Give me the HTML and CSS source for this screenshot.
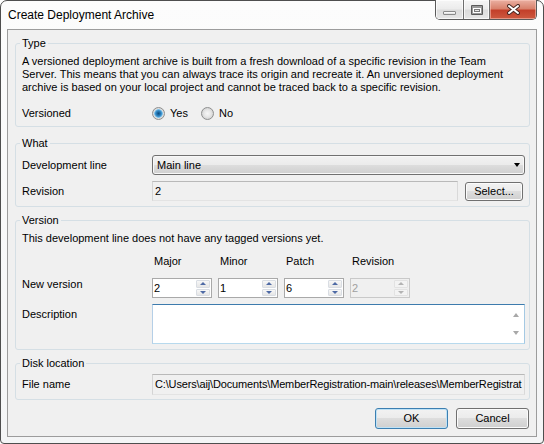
FILE: index.html
```html
<!DOCTYPE html>
<html>
<head>
<meta charset="utf-8">
<title>Create Deployment Archive</title>
<link rel="stylesheet" href="styles.css">
</head>
<body>
<div class="window">
  <div class="titlebar">
    <span class="title">Create Deployment Archive</span>
    <div class="caption-buttons">
      <span class="cb cb-min"><span class="min-glyph"></span></span>
      <span class="cb cb-max">
        <svg width="12" height="10" viewBox="0 0 12 10"><rect x="0" y="0" width="12" height="10" rx="1" fill="#5a5a5a"/><rect x="1" y="1" width="10" height="8" fill="#9a9a9a"/><rect x="2" y="3" width="8" height="5" fill="#ffffff"/><rect x="3" y="4" width="6" height="3" fill="#7a7a7a"/><rect x="4" y="5" width="4" height="1" fill="#e8e8e8"/></svg>
      </span>
      <span class="cb cb-close">
        <svg width="15" height="11" viewBox="0 0 15 11"><path d="M3 2 L12 9 M12 2 L3 9" stroke="#4a2a24" stroke-width="4" stroke-linecap="round"/><path d="M3 2 L12 9 M12 2 L3 9" stroke="#ffffff" stroke-width="2" stroke-linecap="round"/></svg>
      </span>
    </div>
  </div>
  <div class="client">
    <fieldset class="group group-type">
      <legend>Type</legend>
      <p class="desc">A versioned deployment archive is built from a fresh download of a specific revision in the Team<br>Server. This means that you can always trace its origin and recreate it. An unversioned deployment<br>archive is based on your local project and cannot be traced back to a specific revision.</p>
      <div class="row row-versioned">
        <span class="label">Versioned</span>
        <div class="radios">
          <span class="radio"><span class="radio-dot checked"></span><span class="radio-text yes">Yes</span></span>
          <span class="radio"><span class="radio-dot"></span><span class="radio-text">No</span></span>
        </div>
      </div>
    </fieldset>

    <fieldset class="group group-what">
      <legend>What</legend>
      <div class="row">
        <span class="label">Development line</span>
        <div class="combo"><span>Main line</span><span class="combo-arrow"></span></div>
      </div>
      <div class="row row-revision">
        <span class="label">Revision</span>
        <div class="rev-controls">
          <div class="field field-rev">2</div>
          <div class="btn btn-select">Select...</div>
        </div>
      </div>
    </fieldset>

    <fieldset class="group group-version">
      <legend>Version</legend>
      <p class="note">This development line does not have any tagged versions yet.</p>
      <div class="row row-heads">
        <span class="label"></span>
        <div class="spins heads">
          <span class="head">Major</span>
          <span class="head">Minor</span>
          <span class="head">Patch</span>
          <span class="head">Revision</span>
        </div>
      </div>
      <div class="row row-top row-spins">
        <span class="label">New version</span>
        <div class="spins">
          <div class="spin"><span class="spin-val">2</span><span class="spin-btns"><span class="sb up"></span><span class="sb down"></span></span></div>
          <div class="spin"><span class="spin-val">1</span><span class="spin-btns"><span class="sb up"></span><span class="sb down"></span></span></div>
          <div class="spin"><span class="spin-val">6</span><span class="spin-btns"><span class="sb up"></span><span class="sb down"></span></span></div>
          <div class="spin disabled"><span class="spin-val">2</span><span class="spin-btns"><span class="sb up"></span><span class="sb down"></span></span></div>
        </div>
      </div>
      <div class="row row-top row-desc">
        <span class="label label-desc">Description</span>
        <div class="desc-box"><span class="scroll"><span class="sarrow up"></span><span class="sarrow down"></span></span></div>
      </div>
    </fieldset>

    <fieldset class="group group-disk">
      <legend>Disk location</legend>
      <div class="row">
        <span class="label">File name</span>
        <div class="field field-file">C:\Users\aij\Documents\MemberRegistration-main\releases\MemberRegistrat</div>
      </div>
    </fieldset>

    <div class="actions">
      <div class="btn btn-default">OK</div>
      <div class="btn">Cancel</div>
    </div>
  </div>
</div>
</body>
</html>
```

FILE: styles.css
```css
* { box-sizing: border-box; }
html, body { margin: 0; padding: 0; }
body {
  width: 544px;
  height: 444px;
  overflow: hidden;
  background: #ffffff;
  font-family: "Liberation Sans", Arial, sans-serif;
  font-size: 11px;
  color: #000;
}

.window {
  width: 544px;
  height: 444px;
  border: 1px solid #4e4e4e;
  border-radius: 7px 7px 4px 4px;
  background: linear-gradient(#fcfcfc, #f4f5f6);
  padding: 0 6px 6px 6px;
  display: flex;
  flex-direction: column;
}

/* title bar */
.titlebar {
  height: 28px;
  flex: none;
  display: flex;
  align-items: flex-start;
}
.title {
  font-size: 12px;
  line-height: 28px;
  padding-left: 1px;
}
.caption-buttons {
  margin-left: auto;
  margin-top: -1px;
  height: 20px;
  display: flex;
  border: 1px solid #5a5a5a;
  border-top: none;
  border-radius: 0 0 5px 5px;
  overflow: hidden;
}
.cb {
  height: 100%;
  display: flex;
  align-items: center;
  justify-content: center;
}
.cb-min, .cb-max {
  border-right: 1px solid #6e6e6e;
  background: linear-gradient(#f6f6f6 0%, #ececec 45%, #dcdcdc 55%, #e6e6e6 100%);
  box-shadow: inset 0 0 0 1px rgba(255,255,255,0.7);
}
.cb-min { width: 28px; align-items: flex-end; padding-bottom: 4px; }
.cb-max { width: 26px; }
.cb-close {
  width: 46px;
  background: linear-gradient(#eab0a2 0%, #d9826d 45%, #c3402a 55%, #cd5a40 100%);
  box-shadow: inset 0 0 0 1px rgba(255,210,200,0.5);
}
.min-glyph {
  width: 13px;
  height: 4px;
  border: 1px solid #8a8a8a;
  border-radius: 1px;
  background: linear-gradient(#ffffff, #dcdcdc);
}

/* client area */
.client {
  flex: 1;
  border: 1px solid #9c9c9c;
  background: #f0f0f0;
  padding: 0 6px 0 7px;
  display: flex;
  flex-direction: column;
}

.group {
  margin: 0;
  min-width: 0;
  border: 1px solid #d5dfe5;
  border-radius: 3px;
  padding: 5px 4px 5px 6px;
}
.group legend {
  padding: 0 2px;
  margin-left: -2px;
  line-height: 13px;
}
.group-type { margin-top: 7px; padding-bottom: 3px; }
.group-what { margin-top: 10px; }
.group-version { margin-top: 7px; }
.group-disk { margin-top: 7px; padding-top: 4px; padding-bottom: 4px; }

.desc, .note {
  margin: 0;
  line-height: 13px;
  white-space: nowrap;
}

.row {
  display: grid;
  grid-template-columns: 130px 1fr;
  align-items: center;
  line-height: 13px;
}
.row + .row { margin-top: 6px; }
.row-top { align-items: start; }
.row-versioned { margin-top: 9px; height: 20px; }
.row-heads { margin-top: 10px; }
.row-heads + .row-spins { margin-top: 10px; }
.label-desc { margin-top: 4px; }

/* radios */
.radios { display: flex; align-items: center; }
.radio { display: inline-flex; align-items: center; }
.radio-dot {
  width: 13px;
  height: 13px;
  border-radius: 50%;
  border: 1px solid #8e8f8f;
  background: radial-gradient(circle, #f6f6f6 0, #e9e9e9 3px, #d2d2d2 6px);
  margin-right: 5px;
}
.radio-dot.checked {
  background: radial-gradient(circle, #0f4d7e 0, #1c6aa5 1.5px, #3d92cc 3px, #7cc0ea 4px, #e2e2e2 4.6px, #d2d2d2 6px);
}
.radio-text.yes { margin-right: 13px; }

/* combo */
.combo {
  height: 20px;
  border: 1px solid #707070;
  border-radius: 3px;
  background: linear-gradient(#f2f2f2 0%, #ebebeb 50%, #dddddd 51%, #cfcfcf 100%);
  box-shadow: inset 0 0 0 1px #f8f8f8;
  display: flex;
  align-items: center;
  padding: 0 4px 0 4px;
}
.combo-arrow {
  margin-left: auto;
  width: 0;
  height: 0;
  border-left: 3.5px solid transparent;
  border-right: 3.5px solid transparent;
  border-top: 4px solid #000;
}

/* fields */
.rev-controls { display: flex; align-items: flex-start; }
.field {
  height: 20px;
  border: 1px solid;
  border-color: #b9b9b9 #d9d9d9 #e3e3e3 #d4d4d4;
  background: #f0f0f0;
  padding-left: 2px;
  line-height: 18px;
  white-space: nowrap;
  overflow: hidden;
}
.field-rev { flex: 1; }
.field-file { height: 21px; line-height: 19px; letter-spacing: -0.15px; }

/* buttons */
.btn {
  height: 21px;
  width: 73px;
  border: 1px solid #707070;
  border-radius: 3px;
  background: linear-gradient(#f2f2f2 0%, #ebebeb 49%, #dddddd 50%, #cfcfcf 100%);
  box-shadow: inset 0 0 0 1px #fbfbfb;
  display: flex;
  align-items: center;
  justify-content: center;
  line-height: 13px;
}
.btn-select {
  width: 58px;
  height: 19px;
  margin: 1px 2px 0 7px;
}
.btn-default {
  border-color: #3c7fb1;
  box-shadow: inset 0 0 0 1px #bfe2f6;
}
.actions {
  margin-top: 8px;
  display: flex;
  justify-content: flex-end;
  gap: 8px;
  padding-right: 1px;
}

/* spin boxes */
.spins {
  display: flex;
  gap: 6px;
}
.head { width: 60px; padding-left: 2px; }
.spin {
  width: 60px;
  height: 20px;
  border: 1px solid #a9a9a9;
  background: #ffffff;
  padding: 1px;
  display: flex;
}
.spin-val { flex: 1; padding-left: 0; line-height: 16px; }
.spin-btns {
  width: 14px;
  display: flex;
  flex-direction: column;
  gap: 1px;
}
.sb {
  flex: 1;
  border: 1px solid #d9dde3;
  border-radius: 1px;
  background: linear-gradient(#f7f7f7, #e6e6e6);
  display: flex;
  align-items: center;
  justify-content: center;
}
.sb::after {
  content: "";
  width: 0;
  height: 0;
  border-left: 3px solid transparent;
  border-right: 3px solid transparent;
}
.sb.up::after { border-bottom: 3px solid #4e6aa5; }
.sb.down::after { border-top: 3px solid #4e6aa5; }
.spin.disabled { border-color: #c9c9c9; background: #f0f0f0; }
.spin.disabled .spin-val { color: #a0a0a0; }
.spin.disabled .sb { background: #f3f3f3; border-color: #e2e2e2; }
.spin.disabled .sb.up::after { border-bottom-color: #b3b3b3; }
.spin.disabled .sb.down::after { border-top-color: #b3b3b3; }

/* description box */
.desc-box {
  height: 40px;
  border: 1px solid;
  border-color: #3d7bad #a4c9e3 #b7d9ed #b5cfe7;
  background: #ffffff;
  display: flex;
  justify-content: flex-end;
}
.scroll {
  width: 17px;
  display: flex;
  flex-direction: column;
  justify-content: space-between;
  align-items: center;
  padding: 8px 0 8px;
}
.sarrow {
  width: 0;
  height: 0;
  border-left: 3.5px solid transparent;
  border-right: 3.5px solid transparent;
}
.sarrow.up { border-bottom: 4px solid #a8a8a8; }
.sarrow.down { border-top: 4px solid #a8a8a8; }
```
